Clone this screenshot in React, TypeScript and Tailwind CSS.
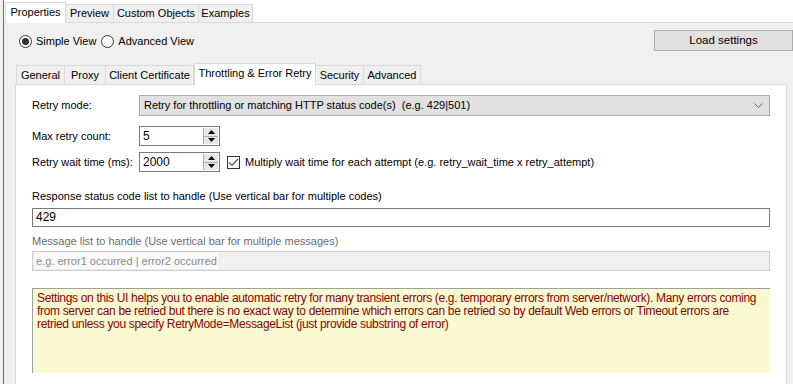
import React from "react";

const ui = "font-['Liberation_Sans',Arial,sans-serif] text-[11px] text-black";

function OuterTab({ label, active, w }: { label: string; active?: boolean; w: string }) {
    if (active) {
        return (
            <div className={`${w} h-[21px] -mb-px bg-white border border-b-0 border-[#d9d9d9] flex items-center justify-center pb-[2px] relative z-10`}>
                {label}
            </div>
        );
    }
    return (
        <div className={`${w} h-[18px] bg-[#f0f0f0] border border-b-0 border-l-0 border-[#d9d9d9] flex items-center justify-center`}>
            {label}
        </div>
    );
}

function InnerTab({ label, active, w }: { label: string; active?: boolean; w: string }) {
    if (active) {
        return (
            <div className={`${w} h-[22px] -mb-px bg-white border border-b-0 border-[#d9d9d9] flex items-center justify-center pb-[3px] relative z-10`}>
                {label}
            </div>
        );
    }
    return (
        <div className={`${w} h-[19px] bg-[#f0f0f0] border border-b-0 border-l-0 border-[#d9d9d9] first:border-l flex items-center justify-center pt-[1px]`}>
            {label}
        </div>
    );
}

function Radio({ checked, label }: { checked?: boolean; label: string }) {
    return (
        <div className="flex items-center gap-[4px]">
            <div className="w-[13px] h-[13px] rounded-full border border-[#333] bg-white flex items-center justify-center">
                {checked && <div className="w-[7px] h-[7px] rounded-full bg-[#333]" />}
            </div>
            <span>{label}</span>
        </div>
    );
}

function Spinner() {
    return (
        <div className="w-[15px] h-full flex flex-col border-l border-[#adadad]">
            <div className="flex-1 bg-[#e8e8e8] border-b border-[#adadad] flex items-center justify-center">
                <svg width="7" height="4" viewBox="0 0 7 4"><path d="M3.5 0 L7 4 L0 4 Z" fill="#000" /></svg>
            </div>
            <div className="flex-1 bg-[#e8e8e8] flex items-center justify-center">
                <svg width="7" height="4" viewBox="0 0 7 4"><path d="M0 0 L7 0 L3.5 4 Z" fill="#000" /></svg>
            </div>
        </div>
    );
}

function NumberBox({ value }: { value: string }) {
    return (
        <div className="w-[81px] h-[20px] bg-white border border-[#7a7a7a] flex items-stretch p-[1px]">
            <div className="flex-1 pl-[2px] text-[12px] leading-[16px]">{value}</div>
            <Spinner />
        </div>
    );
}

export default function App() {
    return (
        <div className={`w-[793px] h-[384px] bg-[#f0f0f0] flex overflow-hidden ${ui}`}>
            <div className="w-[4px] shrink-0 border-r border-[#6a6a6a] bg-[#f0f0f0]" />
            <div className="flex-1 flex flex-col">
                <div className="h-[22px] bg-white flex items-end pl-[1px]">
                    <OuterTab label="Properties" active w="w-[61px]" />
                    <OuterTab label="Preview" w="w-[48px]" />
                    <OuterTab label="Custom Objects" w="w-[85px]" />
                    <OuterTab label="Examples" w="w-[54px]" />
                </div>
                <div className="flex-1 bg-[#f0f0f0] border-t border-[#d9d9d9] flex flex-col">
                    <div className="h-[21px] mt-[7px] flex items-center justify-between pl-[15px]">
                        <div className="flex items-center gap-[5px] pt-[2px]">
                            <Radio checked label="Simple View" />
                            <Radio label="Advanced View" />
                        </div>
                        <div className="w-[139px] h-[21px] bg-[#e1e1e1] border border-[#adadad] flex items-center justify-center text-[11.5px]">
                            Load settings
                        </div>
                    </div>
                    <div className="ml-[11px] w-[772px] mt-[12px] flex flex-col flex-1">
                        <div className="h-[21px] flex items-end pl-[1px]">
                            <InnerTab label="General" w="w-[49px]" />
                            <InnerTab label="Proxy" w="w-[41px]" />
                            <InnerTab label="Client Certificate" w="w-[88px]" />
                            <InnerTab label="Throttling & Error Retry" active w="w-[122px]" />
                            <InnerTab label="Security" w="w-[48px]" />
                            <InnerTab label="Advanced" w="w-[57px]" />
                        </div>
                        <div className="flex-1 bg-white border border-b-0 border-[#d9d9d9] pl-[16px] pt-[10px] flex flex-col">
                            <div className="flex items-center">
                                <div className="w-[107px]">Retry mode:</div>
                                <div className="w-[631px] h-[21px] bg-[#e1e1e1] border border-[#adadad] flex items-center justify-between pl-[4px] pr-[6px]">
                                    <span>Retry for throttling or matching HTTP status code(s)&nbsp; (e.g. 429|501)</span>
                                    <svg width="9" height="5" viewBox="0 0 9 5"><path d="M0.5 0.5 L4.5 4.5 L8.5 0.5" fill="none" stroke="#606060" strokeWidth="1" /></svg>
                                </div>
                            </div>
                            <div className="flex items-center mt-[10px]">
                                <div className="w-[107px]">Max retry count:</div>
                                <NumberBox value="5" />
                            </div>
                            <div className="flex items-center mt-[6px]">
                                <div className="w-[107px]">Retry wait time (ms):</div>
                                <NumberBox value="2000" />
                                <div className="ml-[7px] w-[13px] h-[13px] border border-[#333] bg-white flex items-center justify-center">
                                    <svg width="11" height="9" viewBox="0 0 11 9"><path d="M1 4.5 L4 7.5 L10 1" fill="none" stroke="#555" strokeWidth="1.2" /></svg>
                                </div>
                                <span className="ml-[5px]">Multiply wait time for each attempt (e.g. retry_wait_time x retry_attempt)</span>
                            </div>
                            <div className="h-[15px] leading-[15px] mt-[17px]">
                                Response status code list to handle (Use vertical bar for multiple codes)
                            </div>
                            <div className="w-[738px] h-[19px] mt-[4px] bg-white border border-[#7a7a7a] pl-[3px] leading-[17px] text-[12px]">
                                429
                            </div>
                            <div className="h-[15px] leading-[15px] mt-[7px] text-[#6d6d6d]">
                                Message list to handle (Use vertical bar for multiple messages)
                            </div>
                            <div className="w-[738px] h-[20px] mt-[2px] bg-[#f0f0f0] border border-[#cccccc] pl-[2px] flex items-center">
                                <span className="bg-[#fafafa] text-[#8a8a8a] px-[1px] leading-[16px]">e.g. error1 occurred | error2 occurred</span>
                            </div>
                            <div className="w-[738px] h-[85px] mt-[17px] bg-[#fafad2] border-t border-l border-[#a0a0a0] pl-[4px] pt-[3px] text-[#8b0000] text-[12px] leading-[13px] tracking-[-0.33px]">
                                <div className="whitespace-nowrap">Settings on this UI helps you to enable automatic retry for many transient errors (e.g. temporary errors from server/network). Many errors coming</div>
                                <div className="whitespace-nowrap">from server can be retried but there is no exact way to determine which errors can be retried so by default Web errors or Timeout errors are</div>
                                <div className="whitespace-nowrap">retried unless you specify RetryMode=MessageList (just provide substring of error)</div>
                            </div>
                        </div>
                    </div>
                </div>
            </div>
        </div>
    );
}
